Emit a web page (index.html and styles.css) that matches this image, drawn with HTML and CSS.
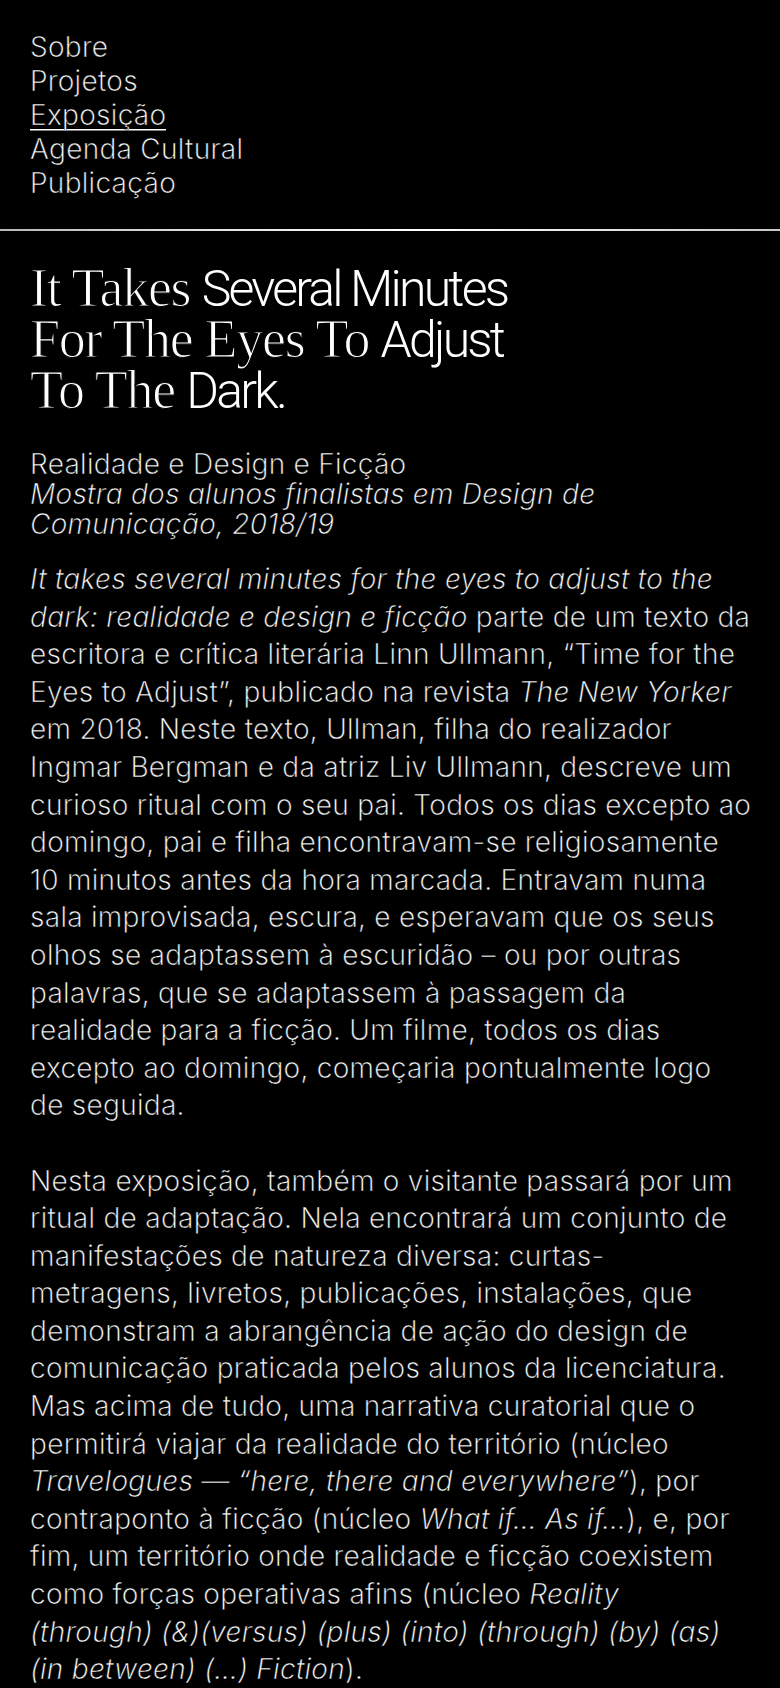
FILE: index.html
```html
<!DOCTYPE html>
<html lang="pt">
<head>
<meta charset="utf-8">
<title>It Takes Several Minutes For The Eyes To Adjust To The Dark.</title>
<link rel="stylesheet" href="styles.css">
</head>
<body>
<header class="site-header">
  <nav class="menu">
    <a class="menu-link" href="#">Sobre</a>
    <a class="menu-link" href="#">Projetos</a>
    <a class="menu-link is-active" href="#">Exposição</a>
    <a class="menu-link" href="#">Agenda Cultural</a>
    <a class="menu-link" href="#">Publicação</a>
  </nav>
</header>
<div class="rule"></div>
<main class="content">
  <h1 class="title">
    <span class="serif">It Takes</span> <span class="sans">Several Minutes</span><br>
    <span class="serif">For The Eyes To</span> <span class="sans">Adjust</span><br>
    <span class="serif">To The</span> <span class="sans">Dark.</span>
  </h1>
  <div class="intro">
    <p class="intro-name">Realidade e Design e Ficção</p>
    <p class="intro-sub">Mostra dos alunos finalistas em Design de<br>Comunicação, 2018/19</p>
  </div>
  <div class="text">
    <p><em>It takes several minutes for the eyes to adjust to the</em><br>
<em>dark: realidade e design e ficção</em> parte de um texto da<br>
escritora e crítica literária Linn Ullmann, “Time for the<br>
Eyes to Adjust”, publicado na revista <em>The New Yorker</em><br>
em 2018. Neste texto, Ullman, filha do realizador<br>
Ingmar Bergman e da atriz Liv Ullmann, descreve um<br>
curioso ritual com o seu pai. Todos os dias excepto ao<br>
domingo, pai e filha encontravam-se religiosamente<br>
10 minutos antes da hora marcada. Entravam numa<br>
sala improvisada, escura, e esperavam que os seus<br>
olhos se adaptassem à escuridão – ou por outras<br>
palavras, que se adaptassem à passagem da<br>
realidade para a ficção. Um filme, todos os dias<br>
excepto ao domingo, começaria pontualmente logo<br>
de seguida.</p>
    <p>Nesta exposição, também o visitante passará por um<br>
ritual de adaptação. Nela encontrará um conjunto de<br>
manifestações de natureza diversa: curtas-<br>
metragens, livretos, publicações, instalações, que<br>
demonstram a abrangência de ação do design de<br>
comunicação praticada pelos alunos da licenciatura.<br>
Mas acima de tudo, uma narrativa curatorial que o<br>
permitirá viajar da realidade do território (núcleo<br>
<em>Travelogues — “here, there and everywhere”</em>), por<br>
contraponto à ficção (núcleo <em>What if… As if…</em>), e, por<br>
fim, um território onde realidade e ficção coexistem<br>
como forças operativas afins (núcleo <em>Reality</em><br>
<em>(through) (&amp;)(versus) (plus) (into) (through) (by) (as)</em><br>
<em>(in between) (…) Fiction</em>).</p>
  </div>
</main>
</body>
</html>
```

FILE: styles.css
```css
* {
  box-sizing: border-box;
}

html,
body {
  margin: 0;
  padding: 0;
  background: #000;
  color: #fff;
}

body {
  font-family: Inter, Roboto, "Liberation Sans", sans-serif;
  font-weight: 300;
  letter-spacing: 0.28px;
  -webkit-text-stroke: 0.4px #000;
  -webkit-font-smoothing: antialiased;
}

.site-header {
  padding: 30px 30px 29px;
}

.menu {
  display: flex;
  flex-direction: column;
  align-items: flex-start;
}

.menu-link {
  color: #fff;
  text-decoration: none;
  font-size: 28px;
  line-height: 34px;
}

.menu-link.is-active {
  background-image: linear-gradient(#fff, #fff);
  background-repeat: no-repeat;
  background-size: 100% 1.5px;
  background-position: 0 calc(100% - 2px);
}

.rule {
  height: 2px;
  background: linear-gradient(to right, #b8b8b8 0%, #e6e6e6 30%, #ffffff 55%, #c8c8c8 100%);
}

.content {
  padding: 33px 20px 40px 30px;
}

.title {
  margin: 0;
  font-family: Roboto, "Liberation Sans", sans-serif;
  font-size: 50px;
  line-height: 51px;
  font-weight: 300;
  letter-spacing: -2.8px;
  word-spacing: 2px;
  -webkit-text-stroke: 0;
}

.title .serif,
.title .sans {
  line-height: 0;
}

.title .serif {
  font-family: "Liberation Serif", serif;
  font-size: 54px;
  font-weight: 400;
  letter-spacing: -1.3px;
  word-spacing: 0;
  -webkit-text-stroke: 1.2px #000;
}

.title .sans {
  font-weight: 300;
  word-spacing: 0;
}

.intro {
  margin-top: 32px;
}

.intro p {
  margin: 0;
  font-size: 28px;
  line-height: 30px;
}

.intro-sub {
  font-style: italic;
}

.text {
  margin-top: 22px;
}

.text p {
  margin: 0 0 37.6px;
  font-size: 28px;
  line-height: 37.6px;
  white-space: nowrap;
}

.text em {
  font-style: italic;
}
```
